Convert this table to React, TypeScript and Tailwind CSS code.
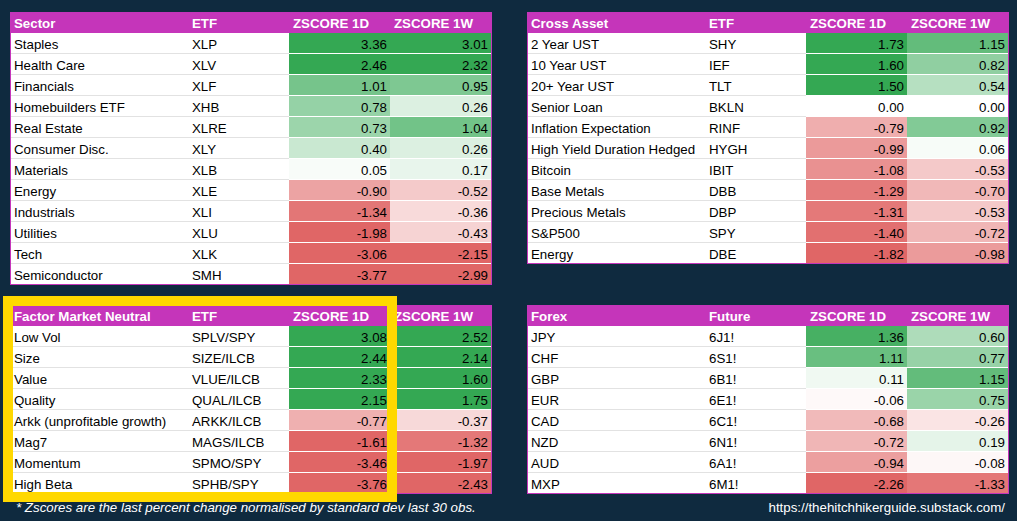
import React from "react";

type Row = [string, string, number, number];

const sector: Row[] = [
  ["Staples", "XLP", 3.36, 3.01],
  ["Health Care", "XLV", 2.46, 2.32],
  ["Financials", "XLF", 1.01, 0.95],
  ["Homebuilders ETF", "XHB", 0.78, 0.26],
  ["Real Estate", "XLRE", 0.73, 1.04],
  ["Consumer Disc.", "XLY", 0.4, 0.26],
  ["Materials", "XLB", 0.05, 0.17],
  ["Energy", "XLE", -0.9, -0.52],
  ["Industrials", "XLI", -1.34, -0.36],
  ["Utilities", "XLU", -1.98, -0.43],
  ["Tech", "XLK", -3.06, -2.15],
  ["Semiconductor", "SMH", -3.77, -2.99],
];

const cross: Row[] = [
  ["2 Year UST", "SHY", 1.73, 1.15],
  ["10 Year UST", "IEF", 1.6, 0.82],
  ["20+ Year UST", "TLT", 1.5, 0.54],
  ["Senior Loan", "BKLN", 0.0, 0.0],
  ["Inflation Expectation", "RINF", -0.79, 0.92],
  ["High Yield Duration Hedged", "HYGH", -0.99, 0.06],
  ["Bitcoin", "IBIT", -1.08, -0.53],
  ["Base Metals", "DBB", -1.29, -0.7],
  ["Precious Metals", "DBP", -1.31, -0.53],
  ["S&P500", "SPY", -1.4, -0.72],
  ["Energy", "DBE", -1.82, -0.98],
];

const factor: Row[] = [
  ["Low Vol", "SPLV/SPY", 3.08, 2.52],
  ["Size", "SIZE/ILCB", 2.44, 2.14],
  ["Value", "VLUE/ILCB", 2.33, 1.6],
  ["Quality", "QUAL/ILCB", 2.15, 1.75],
  ["Arkk (unprofitable growth)", "ARKK/ILCB", -0.77, -0.37],
  ["Mag7", "MAGS/ILCB", -1.61, -1.32],
  ["Momentum", "SPMO/SPY", -3.46, -1.97],
  ["High Beta", "SPHB/SPY", -3.76, -2.43],
];

const forex: Row[] = [
  ["JPY", "6J1!", 1.36, 0.6],
  ["CHF", "6S1!", 1.11, 0.77],
  ["GBP", "6B1!", 0.11, 1.15],
  ["EUR", "6E1!", -0.06, 0.75],
  ["CAD", "6C1!", -0.68, -0.26],
  ["NZD", "6N1!", -0.72, 0.19],
  ["AUD", "6A1!", -0.94, -0.08],
  ["MXP", "6M1!", -2.26, -1.33],
];

function cellColor(v: number): string {
  const t = Math.min(Math.abs(v) / 1.5, 1);
  const c = v >= 0 ? [52, 168, 83] : [224, 102, 102];
  const m = c.map((x) => Math.round(255 + (x - 255) * t));
  return `rgb(${m[0]}, ${m[1]}, ${m[2]})`;
}

function Table({ title, col2, rows }: { title: string; col2: string; rows: Row[] }) {
  return (
    <div className="w-[482px] border border-[#c535ba] bg-white">
      <div className="grid grid-cols-[177px_101px_101px_101px] h-[20px] bg-[#c535ba] text-white font-bold leading-[20px] pt-[1px]">
        <div className="pl-[3px] whitespace-nowrap">{title}</div>
        <div className="pl-[4px]">{col2}</div>
        <div className="pl-[4px] whitespace-nowrap">ZSCORE 1D</div>
        <div className="pl-[4px] whitespace-nowrap">ZSCORE 1W</div>
      </div>
      {rows.map((r, i) => {
        const last = i === rows.length - 1;
        return (
          <div key={i} className="grid grid-cols-[177px_101px_101px_101px] text-black leading-[20px]">
            <div className={`pl-[3px] pt-[2px] whitespace-nowrap ${last ? "h-[20px]" : "h-[21px] border-b border-[#e2e2e2]"}`}>{r[0]}</div>
            <div className={`pl-[4px] pt-[2px] whitespace-nowrap ${last ? "h-[20px]" : "h-[21px] border-b border-[#e2e2e2]"}`}>{r[1]}</div>
            <div
              className={`pr-[3px] pt-[2px] text-right ${last ? "h-[20px]" : "h-[21px] border-b border-white"}`}
              style={{ backgroundColor: cellColor(r[2]) }}
            >
              {r[2].toFixed(2)}
            </div>
            <div
              className={`pr-[3px] pt-[2px] text-right ${last ? "h-[20px]" : "h-[21px] border-b border-white"}`}
              style={{ backgroundColor: cellColor(r[3]) }}
            >
              {r[3].toFixed(2)}
            </div>
          </div>
        );
      })}
    </div>
  );
}

export default function App() {
  return (
    <div className="w-[1017px] h-[521px] overflow-hidden bg-[#0f2a3f] pt-[12px] pl-[10px] pr-[8px] font-['Liberation_Sans',Arial,sans-serif] text-[13.3px]">
      <div className="grid grid-cols-[482px_482px] gap-x-[35px] gap-y-[20px] items-start">
        <Table title="Sector" col2="ETF" rows={sector} />
        <Table title="Cross Asset" col2="ETF" rows={cross} />
        <div className="relative">
          <Table title="Factor Market Neutral" col2="ETF" rows={factor} />
          <div className="absolute left-[-7px] top-[-9px] w-[394px] h-[206px] border-[10px] border-[#ffd800] pointer-events-none" />
        </div>
        <Table title="Forex" col2="Future" rows={forex} />
      </div>
      <div className="flex justify-between items-center mt-[6px] pr-[4px] leading-[15px] text-white">
        <div className="ml-[6px] italic">* Zscores are the last percent change normalised by standard dev last 30 obs.</div>
        <div>https://thehitchhikerguide.substack.com/</div>
      </div>
    </div>
  );
}
